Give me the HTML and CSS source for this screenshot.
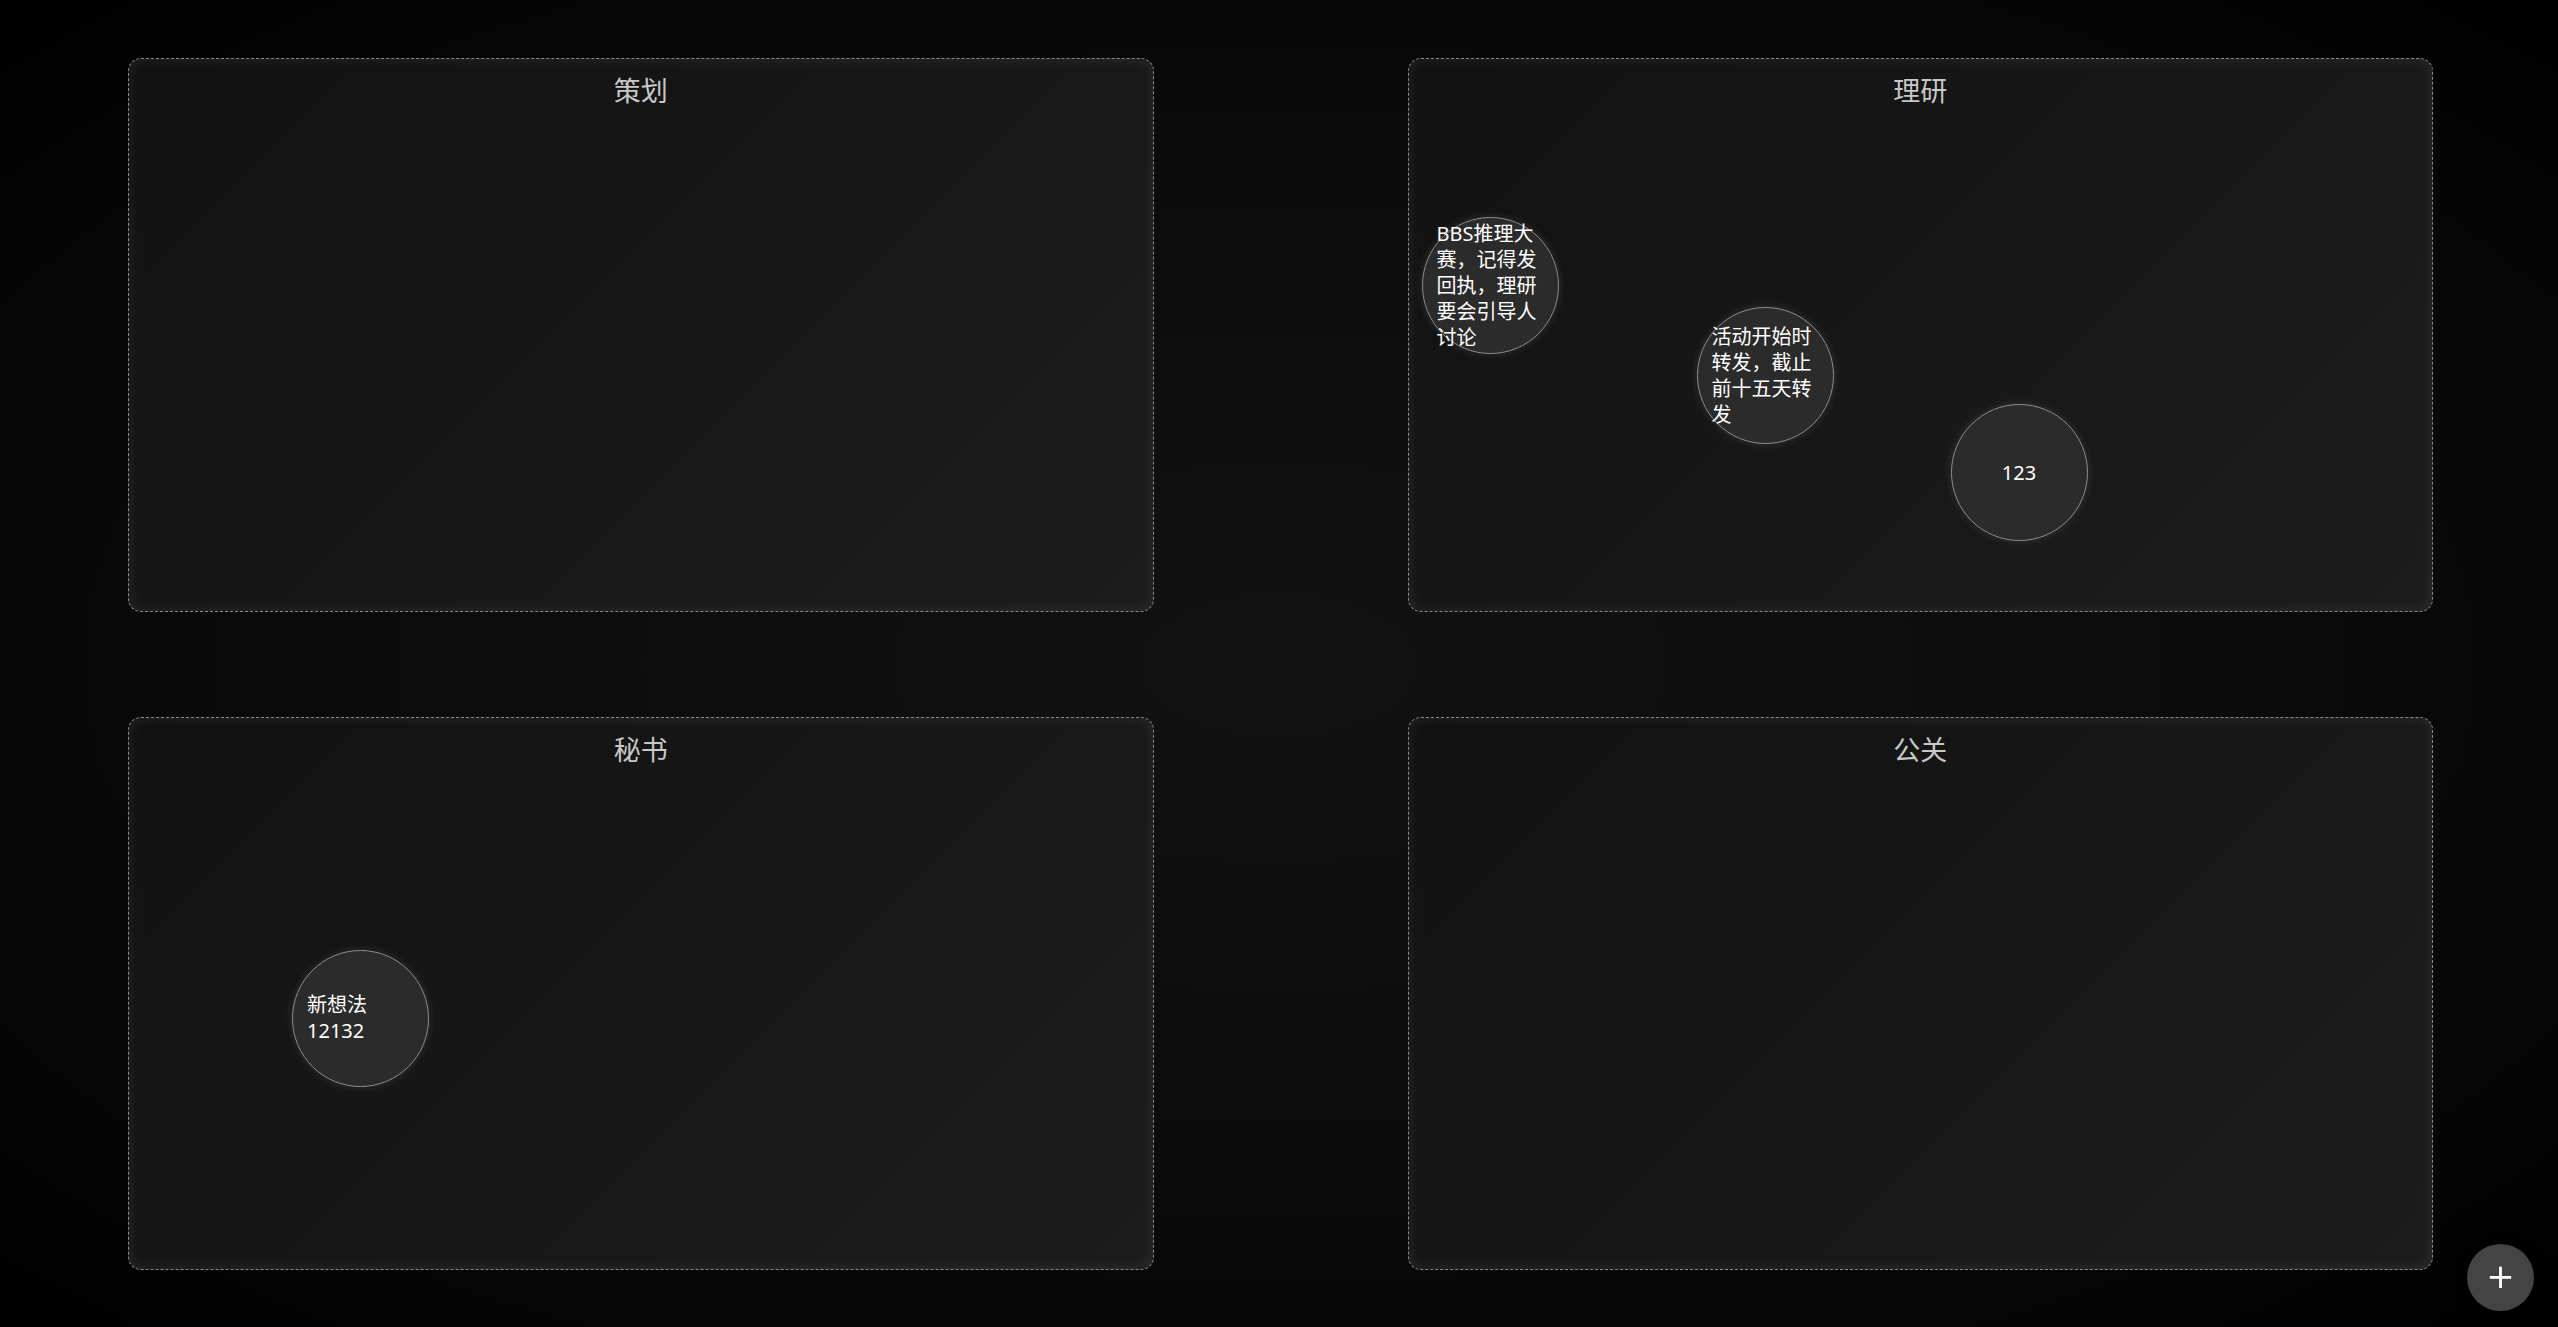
FILE: index.html
```html
<!DOCTYPE html>
<html lang="zh-CN">
<head>
  <meta charset="UTF-8" />
  <meta name="viewport" content="width=device-width, initial-scale=1.0"/>
  <title>想法看板</title>
  <link rel="stylesheet" href="styles.css">
</head>
<body>

<main class="board">
  <section class="zone">
    <h2 class="zone-title">策划</h2>
  </section>

  <section class="zone">
    <h2 class="zone-title">理研</h2>
    <div class="bubble" style="left: 13px; top: 158px;"><span>BBS推理大赛，记得发回执，理研要会引导人讨论</span></div>
    <div class="bubble" style="left: 288px; top: 248px;"><span>活动开始时转发，截止前十五天转发</span></div>
    <div class="bubble" style="left: 542px; top: 345px;"><span>123</span></div>
  </section>

  <section class="zone">
    <h2 class="zone-title">秘书</h2>
    <div class="bubble" style="left: 163px; top: 232px;"><span>新想法 12132</span></div>
  </section>

  <section class="zone">
    <h2 class="zone-title">公关</h2>
  </section>
</main>

<button class="add-btn" title="添加">+</button>

</body>
</html>
```

FILE: styles.css
```css
html, body {
  height: 100%;
}
body {
  margin: 0;
  font-family: 'Noto Sans', 'Noto Sans CJK SC', sans-serif;
  background: radial-gradient(ellipse at center, #121212 0%, #0b0b0b 55%, #000 100%);
  color: #fff;
  overflow: hidden;
}
.board {
  box-sizing: border-box;
  height: 100%;
  padding: 58px 125px 57px 128px;
  display: grid;
  grid-template-columns: 1fr 1fr;
  grid-template-rows: 1fr 1fr;
  column-gap: 254px;
  row-gap: 105px;
}
.zone {
  position: relative;
  border: 1px dashed #8a8a8a;
  border-radius: 13px;
  background: linear-gradient(135deg, #111 0%, #171717 50%, #1c1c1c 100%);
  box-shadow: inset 0 0 14px rgba(255,255,255,0.09);
}
.zone-title {
  margin: 12px 0 0;
  text-align: center;
  font-size: 27px;
  font-weight: normal;
  line-height: 38px;
  color: #c8c8c8;
  font-family: 'Noto Sans CJK SC', sans-serif;
}
.bubble {
  position: absolute;
  box-sizing: border-box;
  width: 137px;
  height: 137px;
  padding: 14px;
  border-radius: 50%;
  border: 1px solid #8c8c8c;
  background: #2b2b2b;
  box-shadow: 0 0 10px rgba(255,255,255,0.12);
  display: flex;
  align-items: center;
  justify-content: center;
  font-size: 20px;
  line-height: 26px;
  color: #fff;
}
.add-btn {
  position: fixed;
  right: 24px;
  bottom: 16px;
  width: 67px;
  height: 67px;
  border-radius: 50%;
  border: none;
  background: #444;
  color: #fff;
  font-size: 34px;
  line-height: 1;
  padding: 0 0 4px;
  font-family: 'DejaVu Sans', sans-serif;
  box-shadow: 0 0 12px rgba(0,0,0,0.6);
  cursor: pointer;
}
```
